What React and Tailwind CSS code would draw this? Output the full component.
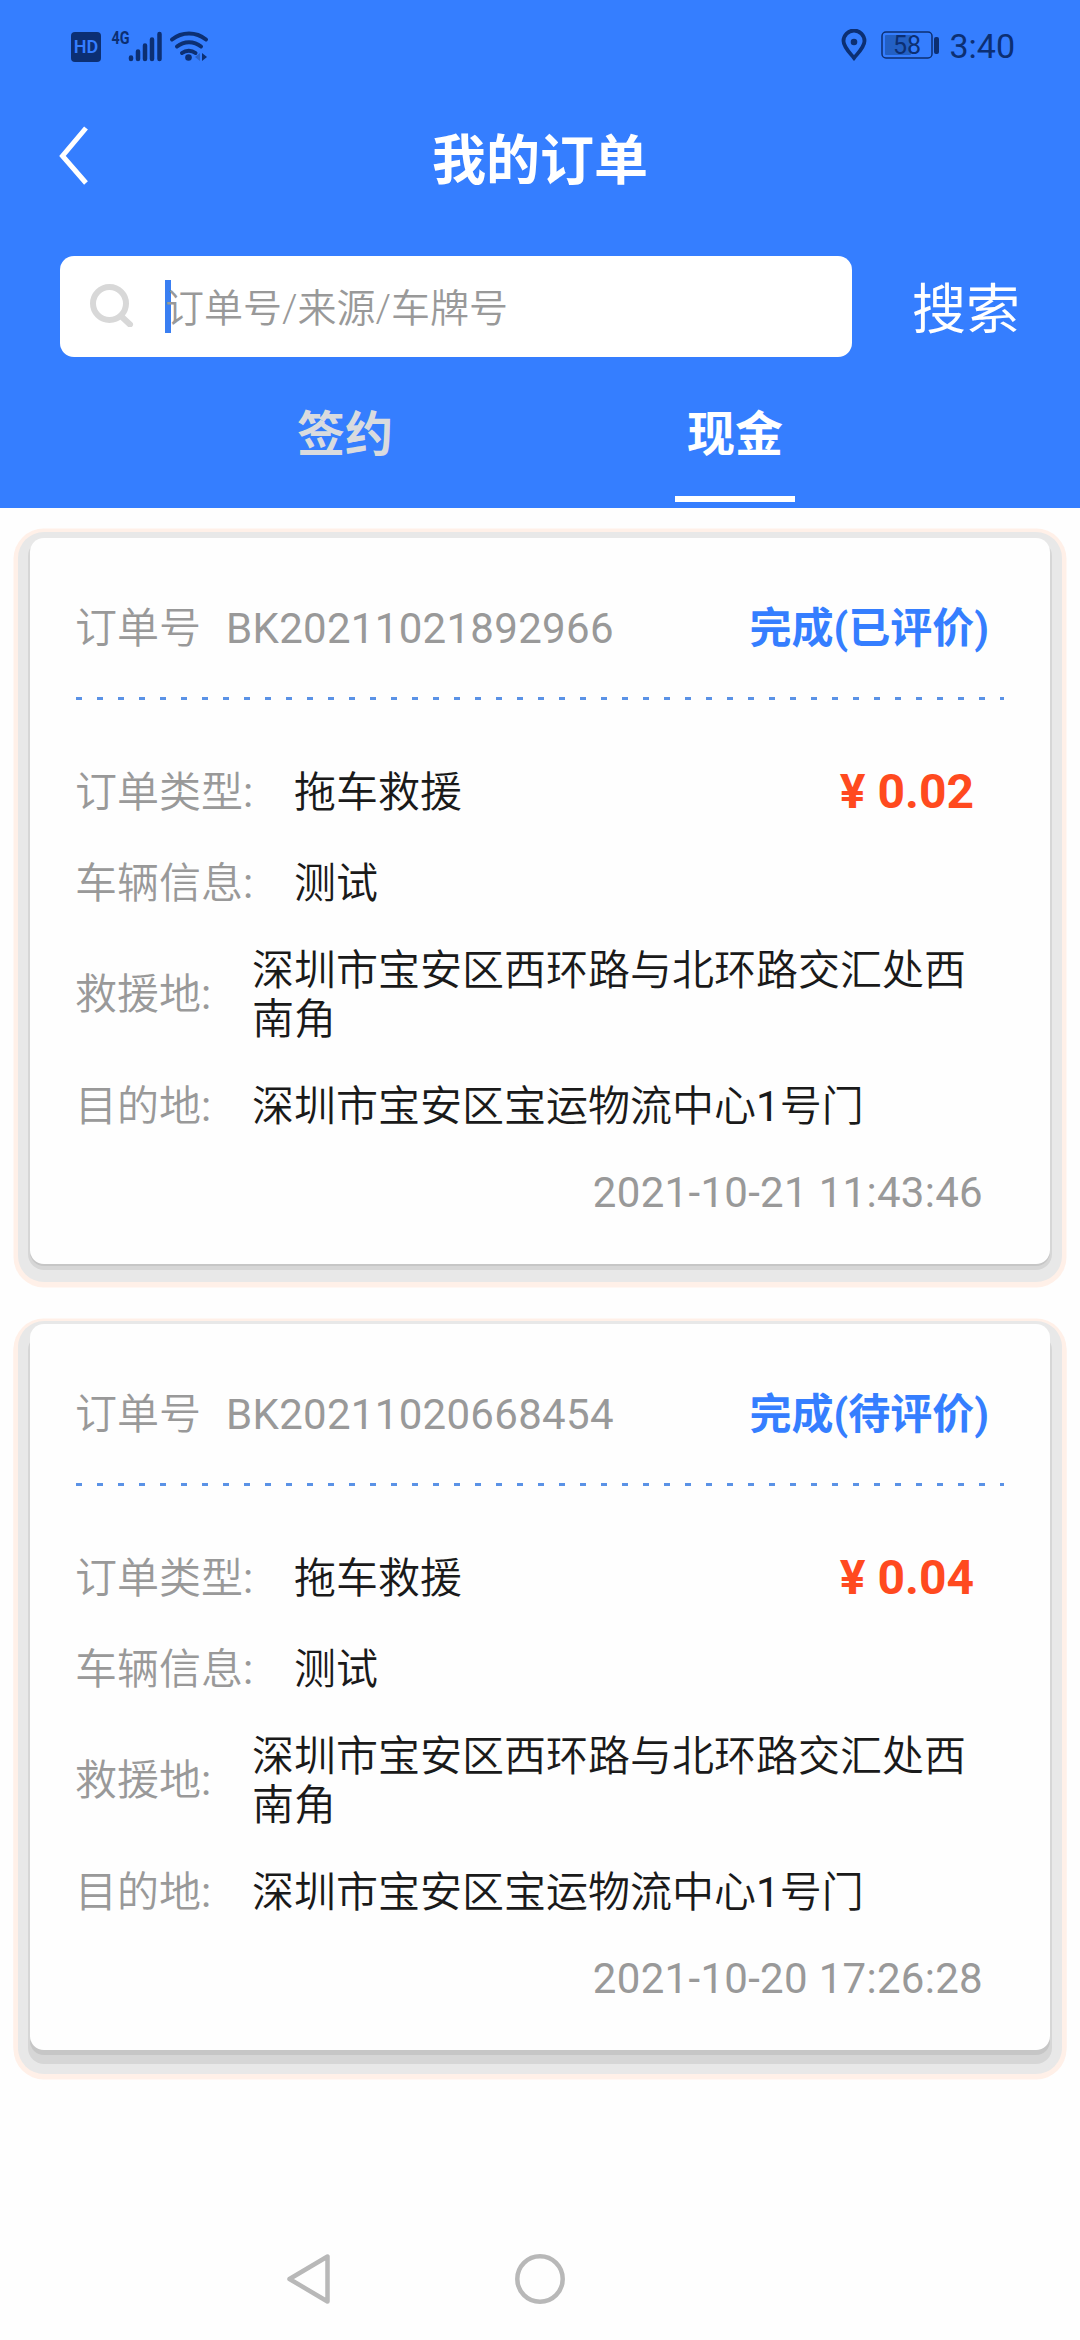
const orders = [
  {
    id: 'BK20211021892966',
    status: '完成(已评价)',
    type: '拖车救援',
    price: '0.02',
    vehicle: '测试',
    from: '深圳市宝安区西环路与北环路交汇处西南角',
    to: '深圳市宝安区宝运物流中心1号门',
    time: '2021-10-21 11:43:46',
    shadow: 'shadow-[0_2px_0_#c6c6c6,0_4px_0_2px_#d6d6d6,0_6px_0_12px_#e8e8e8,0_7px_0_16.5px_#fff0e8]',
  },
  {
    id: 'BK20211020668454',
    status: '完成(待评价)',
    type: '拖车救援',
    price: '0.04',
    vehicle: '测试',
    from: '深圳市宝安区西环路与北环路交汇处西南角',
    to: '深圳市宝安区宝运物流中心1号门',
    time: '2021-10-20 17:26:28',
    shadow: 'shadow-[0_5px_0_#c6c6c6,0_12px_0_2px_#d6d6d6,0_9px_0_12px_#e8e8e8,0_12px_0_12px_#e8e8e8,0_11px_0_16.5px_#fff0e8,0_13px_0_16.5px_#fff0e8]',
  },
];

function StatusBar() {
  return (
    <div className="flex h-[90px] items-center justify-between pl-[71px] pr-[65px] text-[#0c2f73]">
      <div className="flex items-center">
        <span className="mt-[3px] flex h-[30px] w-[30px] items-center justify-center rounded-[4px] bg-[#0c2f73] text-[18px] font-semibold leading-[26px] text-[#357eff]">HD</span>
        <svg className="overflow-visible" width="108" height="34" viewBox="30 0 108 34" fill="none" stroke="currentColor">
          <text x="40.500" y="15.500" fontSize="19" fontWeight="700" fontFamily="Roboto" fill="currentColor" stroke="none" textLength="18" lengthAdjust="spacingAndGlyphs">4G</text>
          <path d="M60 29.500v1.500M67 23.500v7.500M74 17.500v13.500M81 11.500v19.500M88.500 6v25" strokeWidth="4.500" strokeLinecap="round" />
          <path d="M101 11.500a27 27 0 0 1 34 0M106 18.500a19 19 0 0 1 24 0M111 25a11 11 0 0 1 13.500 0" strokeWidth="4" strokeLinecap="round" />
          <circle cx="117.500" cy="29.500" r="3.300" fill="currentColor" stroke="none" />
          <path d="M129 25v8l-5-4z" fill="#2a62c8" stroke="none" />
          <path d="M131 25v8l5-4z" fill="currentColor" stroke="none" />
        </svg>
      </div>

      <div className="flex items-center">
        <svg width="26" height="32" viewBox="0 0 26 32" fill="none" stroke="currentColor">
          <path d="M13 29C9 24 2.500 18 2.500 12a10.500 10.500 0 0 1 21 0C23.500 18 17 24 13 29z" strokeWidth="3.800" />
          <circle cx="13" cy="13" r="3.300" fill="currentColor" stroke="none" />
        </svg>
        <svg className="ml-3.5" width="60" height="30" viewBox="0 0 60 30">
          <rect x="1" y="2" width="50" height="26" rx="4" fill="none" stroke="currentColor" strokeWidth="1.500" />
          <rect x="4" y="5" width="26" height="20" rx="1" fill="#2360c4" />
          <rect x="53" y="7" width="5" height="17" rx="2" fill="currentColor" />
          <text x="26" y="24" textAnchor="middle" fontSize="25" fontFamily="Roboto" fill="currentColor">58</text>
        </svg>
        <span className="ml-[8px] mt-0.5 text-[34px] leading-[40px]">3:40</span>
      </div>
    </div>
  );
}

function Header() {
  return (
    <header className="flex h-[508px] flex-col bg-[#357eff] text-white">
      <StatusBar />

      {/* Título */}
      <div className="grid h-[138px] grid-cols-[120px_1fr_120px] items-center">
        <svg className="-mt-2 ml-[58px]" width="32" height="60" viewBox="0 0 32 60" fill="none" stroke="#fff" strokeWidth="5">
          <path d="M28 3L4.500 31L28 58" />
        </svg>
        <h1 className="pt-[5px] text-center text-[54px] font-bold leading-[60px]">我的订单</h1>
      </div>

      {/* Buscador */}
      <div className="mt-7 flex h-[101px] items-center pl-[60px]">
        <div className="flex h-full w-[792px] items-center rounded-[14px] bg-white pl-[30px]">
          <svg className="-mt-1" width="44" height="44" viewBox="0 0 44 44" fill="none" stroke="#d8d8d8">
            <circle cx="19.500" cy="20.500" r="16.500" strokeWidth="6" />
            <path d="M32 34L40 41.500" strokeWidth="6" strokeLinecap="round" />
          </svg>
          <span className="ml-[31px] h-[53px] w-1.5 bg-[#3a7ff2]" />
          <span className="-ml-1.5 pt-[5px] text-[39px] font-[350] leading-[50px] text-[#999]">订单号/来源/车牌号</span>
        </div>
        <span className="ml-[60px] pt-2 text-[54px] leading-[60px]">搜索</span>
      </div>

      {/* Pestañas */}
      <nav className="flex flex-1 justify-center gap-[270px] text-[48px] font-bold leading-[60px]">
        <div className="flex w-[120px] justify-center pt-[48px] text-[#d9dbde]">签约</div>
        <div className="flex w-[120px] flex-col items-center justify-between pb-1.5 pt-[48px]">
          现金
          <span className="h-1.5 w-full bg-white" />
        </div>
      </nav>
    </header>
  );
}

function Label({ children }) {
  return (
    <span className="-ml-px text-[#999]">
      {children}
      <span className="font-normal">:</span>
    </span>
  );
}

// Los números van con peso normal, el texto chino con uno más fino
function Value({ text }) {
  return text.split(/(\d+)/).map((part, i) => (
    <span key={i} className={/\d/.test(part) ? 'font-normal' : ''}>{part}</span>
  ));
}

function OrderCard({ order }) {
  return (
    <article className={`h-[726px] rounded-[14px] bg-[#fefefe] px-[46px] text-[42px] font-[350] leading-[49px] text-[#1a1a1a] ${order.shadow}`}>
      <div className="flex h-[159px] items-center justify-between pr-[15px] pt-[22px] text-[#999]">
        <div className="-ml-px flex gap-[25px]">
          <span>订单号</span>
          <span className="font-normal tracking-[0.3px]">{order.id}</span>
        </div>
        <span className="font-bold text-[#357eff]">{order.status}</span>
      </div>
      <div className="h-[3px] bg-[repeating-linear-gradient(90deg,#5a92e6_0_6px,transparent_6px_21px)]" />

      <div className="mt-[47px] flex h-[91px] items-center">
        <div className="w-[218px]"><Label>订单类型</Label></div>
        <span>{order.type}</span>
        <span className="-mt-0.5 ml-auto mr-[30px] text-[48px] font-bold text-[#ff4a1f]">¥ {order.price}</span>
      </div>
      <div className="flex h-[91px] items-center">
        <div className="w-[218px]"><Label>车辆信息</Label></div>
        <span>{order.vehicle}</span>
      </div>
      <div className="flex h-[131px] items-center">
        <div className="w-[176px]"><Label>救援地</Label></div>
        <div className="w-[730px]"><Value text={order.from} /></div>
      </div>
      <div className="flex h-[93px] items-center">
        <div className="w-[176px]"><Label>目的地</Label></div>
        <div><Value text={order.to} /></div>
      </div>
      <div className="flex h-[79px] items-center justify-end pr-[21px] font-normal tracking-[0.3px] text-[#999]">{order.time}</div>
    </article>
  );
}

function NavBar() {
  return (
    <div className="mt-auto flex h-[122px] items-center pl-[285px]">
      <svg width="48" height="54" viewBox="0 0 48 54" fill="none" stroke="#b8b8b8" strokeWidth="4.500" strokeLinejoin="round">
        <path d="M42.500 4.500V49.500L4.500 27z" />
      </svg>
      <svg className="ml-[180px]" width="54" height="54" viewBox="0 0 54 54" fill="none" stroke="#b8b8b8" strokeWidth="4.500">
        <circle cx="27" cy="27" r="22.700" />
      </svg>
    </div>
  );
}

function App() {
  return (
    <div className="flex h-[2340px] w-[1080px] flex-col overflow-hidden bg-[#fefefe] font-[Roboto,'Noto_Sans_CJK_SC',sans-serif]">
      <Header />
      <main className="flex flex-col gap-[60px] px-[30px] pt-[30px]">
        {orders.map((order) => (
          <OrderCard key={order.id} order={order} />
        ))}
      </main>
      <NavBar />
    </div>
  );
}
export default App;
